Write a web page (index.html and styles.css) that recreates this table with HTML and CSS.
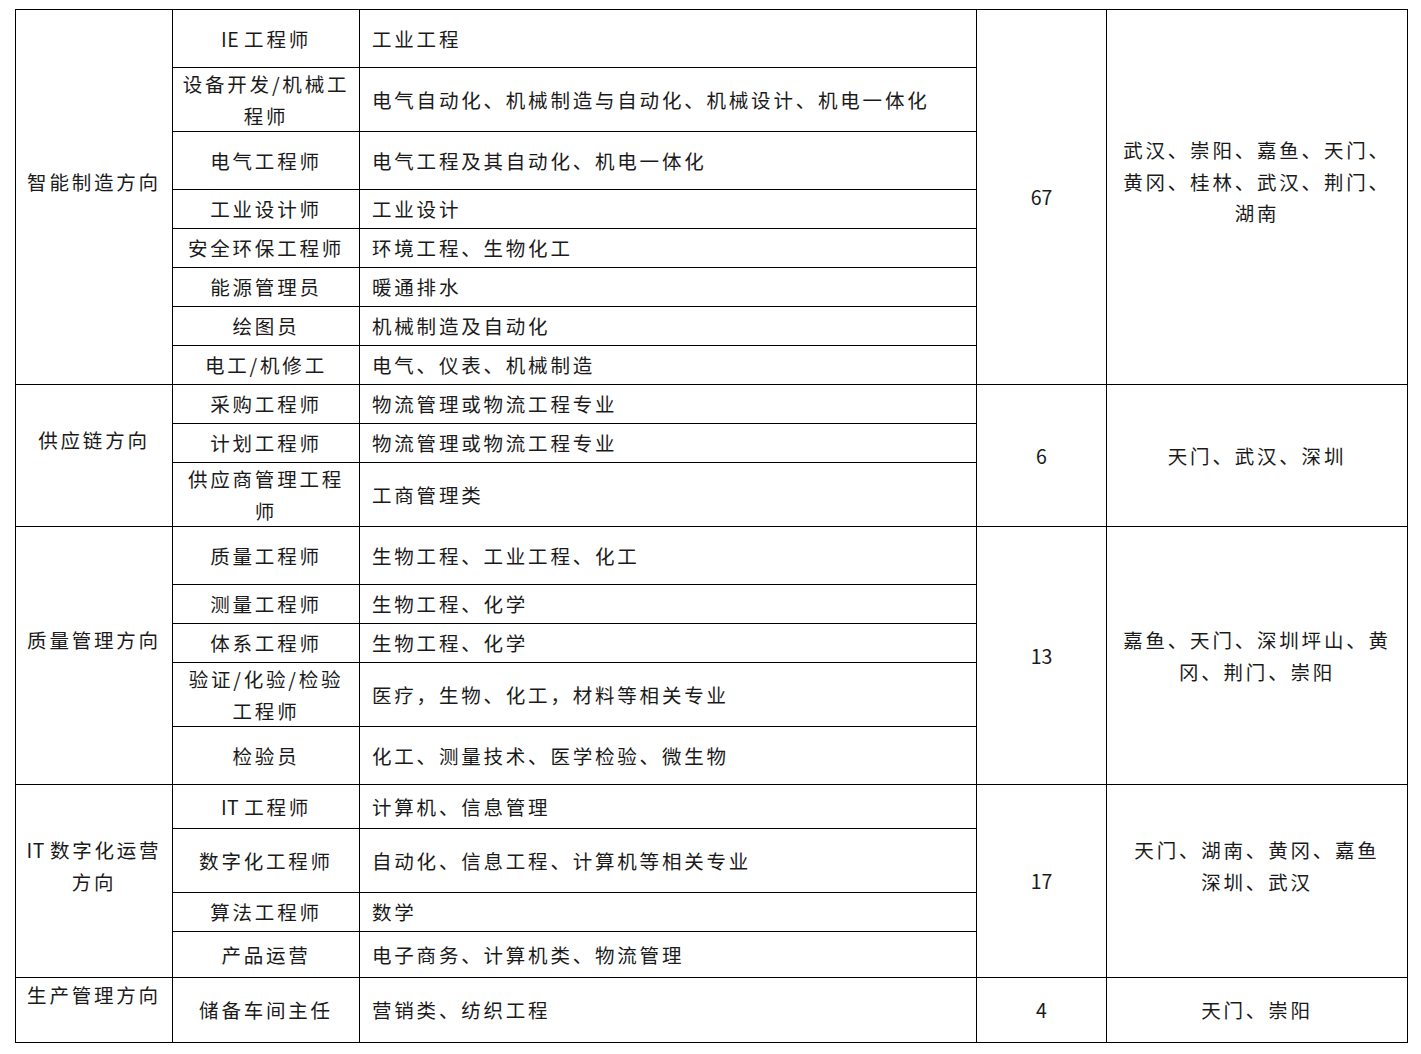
FILE: index.html
```html
<!DOCTYPE html>
<html lang="zh-CN">
<head>
<meta charset="utf-8">
<title>招聘岗位</title>
<link rel="stylesheet" href="styles.css">
</head>
<body>
<table class="jobs">
  <colgroup>
    <col class="c1"><col class="c2"><col class="c3"><col class="c4"><col class="c5">
  </colgroup>
  <tbody>
    <tr class="h58">
      <td class="dir" rowspan="8">智能制造方向</td>
      <td class="pos"><span class="lat">IE </span>工程师</td>
      <td class="major">工业工程</td>
      <td class="num" rowspan="8">67</td>
      <td class="loc shift" rowspan="8">武汉、崇阳、嘉鱼、天门、黄冈、桂林、武汉、荆门、湖南</td>
    </tr>
    <tr class="h64"><td class="pos">设备开发/机械工程师</td><td class="major">电气自动化、机械制造与自动化、机械设计、机电一体化</td></tr>
    <tr class="h58"><td class="pos">电气工程师</td><td class="major">电气工程及其自动化、机电一体化</td></tr>
    <tr class="h39"><td class="pos">工业设计师</td><td class="major">工业设计</td></tr>
    <tr class="h39"><td class="pos">安全环保工程师</td><td class="major">环境工程、生物化工</td></tr>
    <tr class="h39"><td class="pos">能源管理员</td><td class="major">暖通排水</td></tr>
    <tr class="h39"><td class="pos">绘图员</td><td class="major">机械制造及自动化</td></tr>
    <tr class="h39"><td class="pos">电工/机修工</td><td class="major">电气、仪表、机械制造</td></tr>

    <tr class="h39">
      <td class="dir" rowspan="3">供应链方向</td>
      <td class="pos">采购工程师</td>
      <td class="major">物流管理或物流工程专业</td>
      <td class="num" rowspan="3">6</td>
      <td class="loc" rowspan="3">天门、武汉、深圳</td>
    </tr>
    <tr class="h39"><td class="pos">计划工程师</td><td class="major">物流管理或物流工程专业</td></tr>
    <tr class="h64"><td class="pos">供应商管理工程师</td><td class="major">工商管理类</td></tr>

    <tr class="h58">
      <td class="dir" rowspan="5">质量管理方向</td>
      <td class="pos">质量工程师</td>
      <td class="major">生物工程、工业工程、化工</td>
      <td class="num" rowspan="5">13</td>
      <td class="loc" rowspan="5">嘉鱼、天门、深圳坪山、黄冈、荆门、崇阳</td>
    </tr>
    <tr class="h39"><td class="pos">测量工程师</td><td class="major">生物工程、化学</td></tr>
    <tr class="h39"><td class="pos">体系工程师</td><td class="major">生物工程、化学</td></tr>
    <tr class="h64"><td class="pos">验证/化验/检验工程师</td><td class="major">医疗，生物、化工，材料等相关专业</td></tr>
    <tr class="h58"><td class="pos">检验员</td><td class="major">化工、测量技术、医学检验、微生物</td></tr>

    <tr class="h44">
      <td class="dir" rowspan="4"><span class="lat">IT </span>数字化运营方向</td>
      <td class="pos"><span class="lat">IT </span>工程师</td>
      <td class="major">计算机、信息管理</td>
      <td class="num" rowspan="4">17</td>
      <td class="loc shift" rowspan="4">天门、湖南、黄冈、嘉鱼<br>深圳、武汉</td>
    </tr>
    <tr class="h64"><td class="pos">数字化工程师</td><td class="major">自动化、信息工程、计算机等相关专业</td></tr>
    <tr class="h39"><td class="pos">算法工程师</td><td class="major">数学</td></tr>
    <tr class="h46"><td class="pos">产品运营</td><td class="major">电子商务、计算机类、物流管理</td></tr>

    <tr class="h65">
      <td class="dir">生产管理方向</td>
      <td class="pos">储备车间主任</td>
      <td class="major">营销类、纺织工程</td>
      <td class="num">4</td>
      <td class="loc">天门、崇阳</td>
    </tr>
  </tbody>
</table>
</body>
</html>
```

FILE: styles.css
```css
html, body {
  background: #ffffff;
}
body {
  margin: 9px 0 0 15px;
  font-family: "Noto Sans CJK SC", "Noto Sans", sans-serif;
  font-size: 19.5px;
  color: #1a1a1a;
}
.jobs {
  border-collapse: collapse;
  table-layout: fixed;
  width: 1392px;
}
.c1 { width: 157px; }
.c2 { width: 187px; }
.c3 { width: 617px; }
.c4 { width: 130px; }
.c5 { width: 301px; }

.jobs td {
  border: 1px solid #000;
  padding: 0 9px;
  line-height: 31.5px;
  vertical-align: middle;
  letter-spacing: 2.8px;
  word-break: break-all;
}
.lat {
  letter-spacing: 0.5px;
}
.h39 { height: 39px; }
.h44 { height: 44px; }
.h46 { height: 46px; }
.h58 { height: 58px; }
.h64 { height: 64px; }
.h65 { height: 65px; }

.jobs td.dir {
  text-align: center;
  padding: 0 6px 31px 6px;
}
.jobs td.pos {
  text-align: center;
  padding: 0 5px;
}
.jobs td.major {
  text-align: left;
  padding: 0 10px 0 12px;
}
.jobs td.num {
  text-align: center;
  letter-spacing: 0;
}
.jobs td.loc {
  text-align: center;
  padding: 0 8px;
}
.jobs td.loc.shift {
  padding-bottom: 31px;
}
```
